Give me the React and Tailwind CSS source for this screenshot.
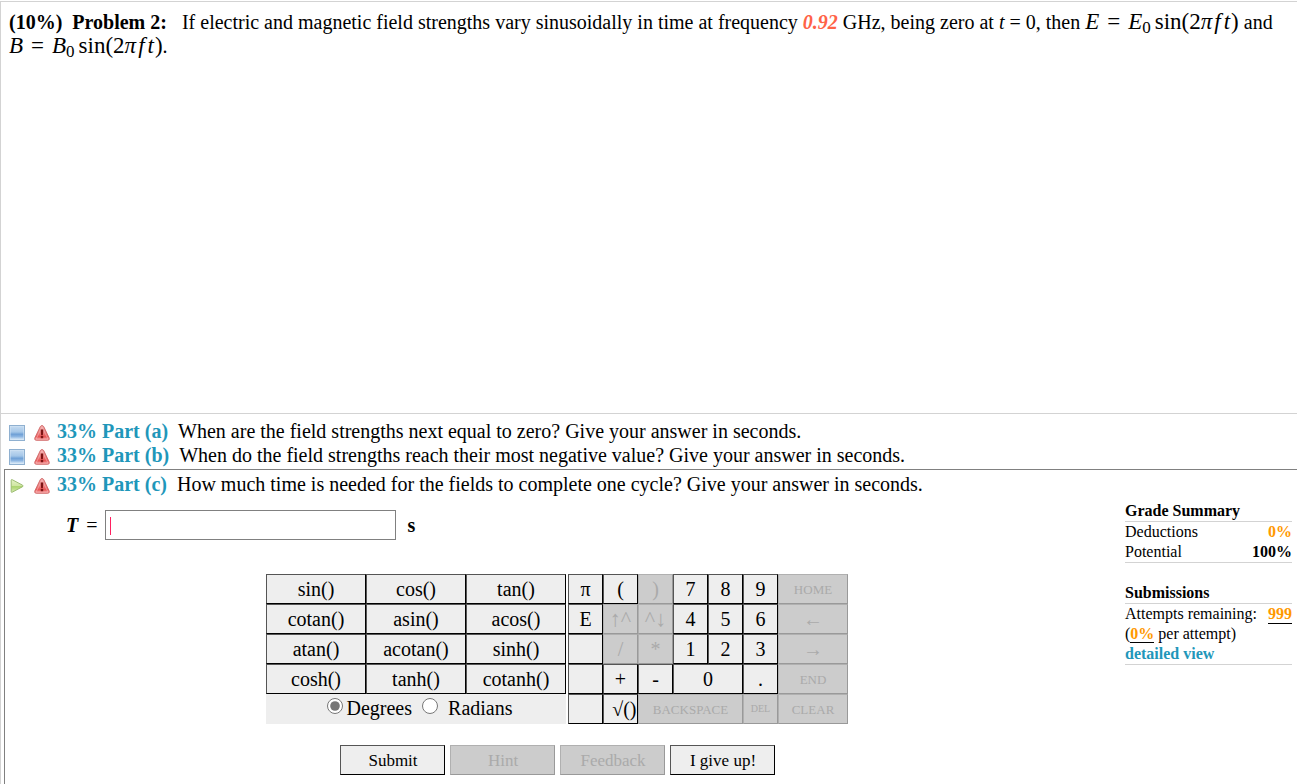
import { useState } from "react";

const FUNCTIONS = [
  ["sin()", "cos()", "tan()"],
  ["cotan()", "asin()", "acos()"],
  ["atan()", "acotan()", "sinh()"],
  ["cosh()", "tanh()", "cotanh()"],
];

const KEYS = [
  { label: "π" },
  { label: "(" },
  { label: ")", off: true },
  { label: "7" },
  { label: "8" },
  { label: "9" },
  { label: "HOME", off: true, span: "col-span-2", size: "text-[13px]" },
  { label: "E" },
  { label: "↑^", off: true, size: "text-[22px]" },
  { label: "^↓", off: true, size: "text-[22px]" },
  { label: "4" },
  { label: "5" },
  { label: "6" },
  { label: "←", off: true, span: "col-span-2", name: "Move left" },
  { label: "", name: "Empty key 1" },
  { label: "/", off: true },
  { label: "*", off: true },
  { label: "1" },
  { label: "2" },
  { label: "3" },
  { label: "→", off: true, span: "col-span-2", name: "Move right" },
  { label: "", name: "Empty key 2" },
  { label: "+" },
  { label: "-" },
  { label: "0", span: "col-span-2" },
  { label: "." },
  { label: "END", off: true, span: "col-span-2", size: "text-[13px]" },
  { label: "", name: "Empty key 3" },
  { label: "√()", align: "justify-end" },
  { label: "BACKSPACE", off: true, span: "col-span-3", size: "text-[13px]" },
  { label: "DEL", off: true, size: "text-[10px]" },
  { label: "CLEAR", off: true, span: "col-span-2", size: "text-[13px]" },
];

function Key({ label, name, off, span = "", size = "text-xl", align = "justify-center pl-px" }) {
  const tone = off
    ? "bg-[#cccccc] text-[#aaaaaa] border-t-[#b0b0b0] border-l-[#b0b0b0] border-b-[#999999] border-r-[#999999]"
    : "bg-[#eeeeee] text-black border-t-[#555555] border-l-[#555555] border-b-black border-r-black";
  return (
    <button
      type="button"
      disabled={off}
      aria-label={name}
      className={`flex h-[30px] items-center border leading-none whitespace-nowrap ${align} ${tone} ${span} ${size}`}
    >
      {label}
    </button>
  );
}

function WarningIcon() {
  return (
    <svg width="16" height="16" viewBox="0 0 16 16" aria-hidden="true">
      <defs>
        <linearGradient id="warn" x1="0" y1="0" x2="0" y2="1">
          <stop offset="0" stopColor="#f3b0b0" />
          <stop offset="0.55" stopColor="#ea7474" />
          <stop offset="0.75" stopColor="#e85555" />
          <stop offset="1" stopColor="#f7a8a8" />
        </linearGradient>
      </defs>
      <path d="M8 .6 Q9.2 .6 9.8 1.8 L15.2 13 Q15.8 15.2 13.8 15.3 H2.2 Q.2 15.2 .8 13 L6.2 1.8 Q6.8 .6 8 .6Z" fill="url(#warn)" stroke="#cf6464" strokeWidth="0.9" />
      <path d="M8 2 L14 14 H2Z" fill="none" stroke="#f8bcbc" strokeWidth="0.6" />
      <path d="M6.7 4.6h2.6L8.9 10.2H7.1Z M6.8 11h2.4v2.2H6.8Z" fill="#7d1414" />
    </svg>
  );
}

function SquareIcon() {
  return (
    <svg width="16" height="16" viewBox="0 0 16 16" aria-hidden="true">
      <defs>
        <linearGradient id="square" x1="0" y1="0" x2="0" y2="1">
          <stop offset="0" stopColor="#c3daf0" />
          <stop offset="0.42" stopColor="#a4c6e8" />
          <stop offset="0.6" stopColor="#6fa0d6" />
          <stop offset="0.78" stopColor="#8db6e2" />
          <stop offset="1" stopColor="#dcebf8" />
        </linearGradient>
      </defs>
      <rect x="0.5" y="0.5" width="15" height="15" fill="#d3e4f4" stroke="#8fb0d0" />
      <rect x="1.5" y="1.5" width="13" height="13" fill="url(#square)" />
    </svg>
  );
}

function PlayIcon() {
  return (
    <svg width="16" height="16" viewBox="0 0 16 16" aria-hidden="true">
      <defs>
        <linearGradient id="play" x1="0" y1="0" x2="0" y2="1">
          <stop offset="0" stopColor="#e6f2c8" />
          <stop offset="0.48" stopColor="#cfe6a2" />
          <stop offset="0.55" stopColor="#aad36c" />
          <stop offset="1" stopColor="#d9ecb4" />
        </linearGradient>
      </defs>
      <path d="M2.2 2.2 Q2.2 1.3 3.2 1.7 L13.6 7.2 Q14.6 8 13.6 8.7 L3.2 14.2 Q2.2 14.6 2.2 13.7Z" fill="url(#play)" stroke="#9cbc72" />
    </svg>
  );
}

function Part({ id, open, children }) {
  return (
    <div className="flex h-6 items-center text-xl">
      <span className="mt-1 w-[25px] shrink-0">{open ? <PlayIcon /> : <SquareIcon />}</span>
      <span className="mt-1 w-[23px] shrink-0">
        <WarningIcon />
      </span>
      <a href={`#part-${id}`} className="mr-[10px] font-bold whitespace-nowrap text-[#1f97ba]">
        33% Part ({id})
      </a>
      <p>{children}</p>
    </div>
  );
}

function Wave({ symbol }) {
  return (
    <span className="text-[23px] leading-none whitespace-nowrap">
      <i>{symbol}</i>
      <span className="mx-2">=</span>
      <i>{symbol}</i>
      <sub className="bottom-[-4px] text-[17px] leading-none">0</sub>
      <span className="ml-1">sin(2</span>
      <i>π</i>
      <i className="mx-[2px]">f</i>
      <i className="mx-px">t</i>)
    </span>
  );
}

export default function App() {
  const [answer, setAnswer] = useState("");
  const [unit, setUnit] = useState("degrees");

  return (
    <main className="mt-px flex min-h-[calc(100vh-1px)] flex-col border-t border-l border-[#d3d3d3] bg-white font-['Liberation_Serif',serif] text-black">
      <section className="min-h-[411px] px-2 pt-2 text-xl leading-6">
        <p>
          <b className="mr-[15px]">(10%)&nbsp; Problem 2:</b>
          If electric and magnetic field strengths vary sinusoidally in time at frequency{" "}
          <b className="text-[#ff6347] italic">0.92</b> GHz, being zero at <i>t</i> = 0, then{" "}
          <Wave symbol="E" /> and <Wave symbol="B" />.
        </p>
      </section>

      <section className="flex flex-1 flex-col border-t border-[#d3d3d3]">
        <div className="px-2 pt-[5px] pb-[2px]">
          <Part id="a">When are the field strengths next equal to zero? Give your answer in seconds.</Part>
          <Part id="b">When do the field strengths reach their most negative value? Give your answer in seconds.</Part>
        </div>

        <div className="ml-[3px] flex-1 border-t border-l border-[#808080]">
          <div className="pt-[2px] pl-1">
            <Part id="c" open>
              How much time is needed for the fields to complete one cycle? Give your answer in seconds.
            </Part>
          </div>

          <div className="flex">
            <form className="flex-1" onSubmit={(e) => e.preventDefault()}>
              <div className="flex items-center pt-[14px] pl-[61px] text-xl">
                <label htmlFor="answer" className="mr-[7px] flex gap-2">
                  <b className="italic">T</b>
                  <span>=</span>
                </label>
                <div className="relative">
                  <input
                    id="answer"
                    type="text"
                    autoComplete="off"
                    value={answer}
                    onChange={(e) => setAnswer(e.target.value)}
                    className="peer block h-[30px] w-[291px] border border-[#808080] px-1 caret-[#ff4080] outline-none"
                  />
                  <span className="pointer-events-none absolute top-[7px] left-[5px] h-[18px] w-px bg-[#ff2060] peer-focus:hidden" />
                </div>
                <span className="ml-3 font-bold">s</span>
              </div>

              <div className="mt-[34px] flex justify-center gap-[2px] pr-[2px]">
                <div>
                  <div className="grid grid-cols-[100px_100px_100px]">
                    {FUNCTIONS.flat().map((f) => (
                      <Key key={f} label={f} />
                    ))}
                  </div>
                  <div className="flex h-[30px] items-center justify-center bg-[#eeeeee] pb-[2px] pl-2 text-xl">
                    <input
                      id="degrees"
                      type="radio"
                      name="unit"
                      checked={unit === "degrees"}
                      onChange={() => setUnit("degrees")}
                      className="mr-1 mb-1 size-4 accent-[#767676]"
                    />
                    <label htmlFor="degrees" className="mr-[10px]">Degrees</label>
                    <input
                      id="radians"
                      type="radio"
                      name="unit"
                      checked={unit === "radians"}
                      onChange={() => setUnit("radians")}
                      className="mr-[10px] mb-1 size-4 accent-[#767676]"
                    />
                    <label htmlFor="radians">Radians</label>
                  </div>
                </div>
                <div className="grid grid-cols-[repeat(8,35px)] self-start">
                  {KEYS.map((k, i) => (
                    <Key key={i} {...k} />
                  ))}
                </div>
              </div>

              <div className="mt-[21px] flex justify-center">
                <div className="grid grid-cols-[repeat(4,105px)] gap-[5px]">
                  <Key label="Submit" size="text-[17px]" />
                  <Key label="Hint" off size="text-[17px]" />
                  <Key label="Feedback" off size="text-[17px]" />
                  <Key label="I give up!" size="text-[17px]" />
                </div>
              </div>
            </form>

            <aside className="mt-[5px] mr-[5px] ml-[15px] w-[167px] text-base leading-5">
              <table className="w-full">
                <caption className="border-b border-[#d3d3d3] text-left font-bold">Grade Summary</caption>
                <tbody>
                  <tr>
                    <td>Deductions</td>
                    <td className="text-right font-bold text-[#ff9900]">0%</td>
                  </tr>
                  <tr>
                    <td>Potential</td>
                    <td className="text-right font-bold">100%</td>
                  </tr>
                </tbody>
              </table>
              <h2 className="border-t border-b border-[#d3d3d3] pt-5 font-bold">Submissions</h2>
              <div className="border-b border-[#d3d3d3]">
                <p className="flex justify-between whitespace-nowrap">
                  Attempts remaining: <b className="border-b border-black leading-[19px] text-[#ff9900]">999</b>
                </p>
                <p>
                  (<b className="border-b border-black text-[#ff9900]">0%</b> per attempt)
                </p>
                <a href="#details" className="block font-bold text-[#1f97ba]">detailed view</a>
              </div>
            </aside>
          </div>
        </div>
      </section>
    </main>
  );
}
